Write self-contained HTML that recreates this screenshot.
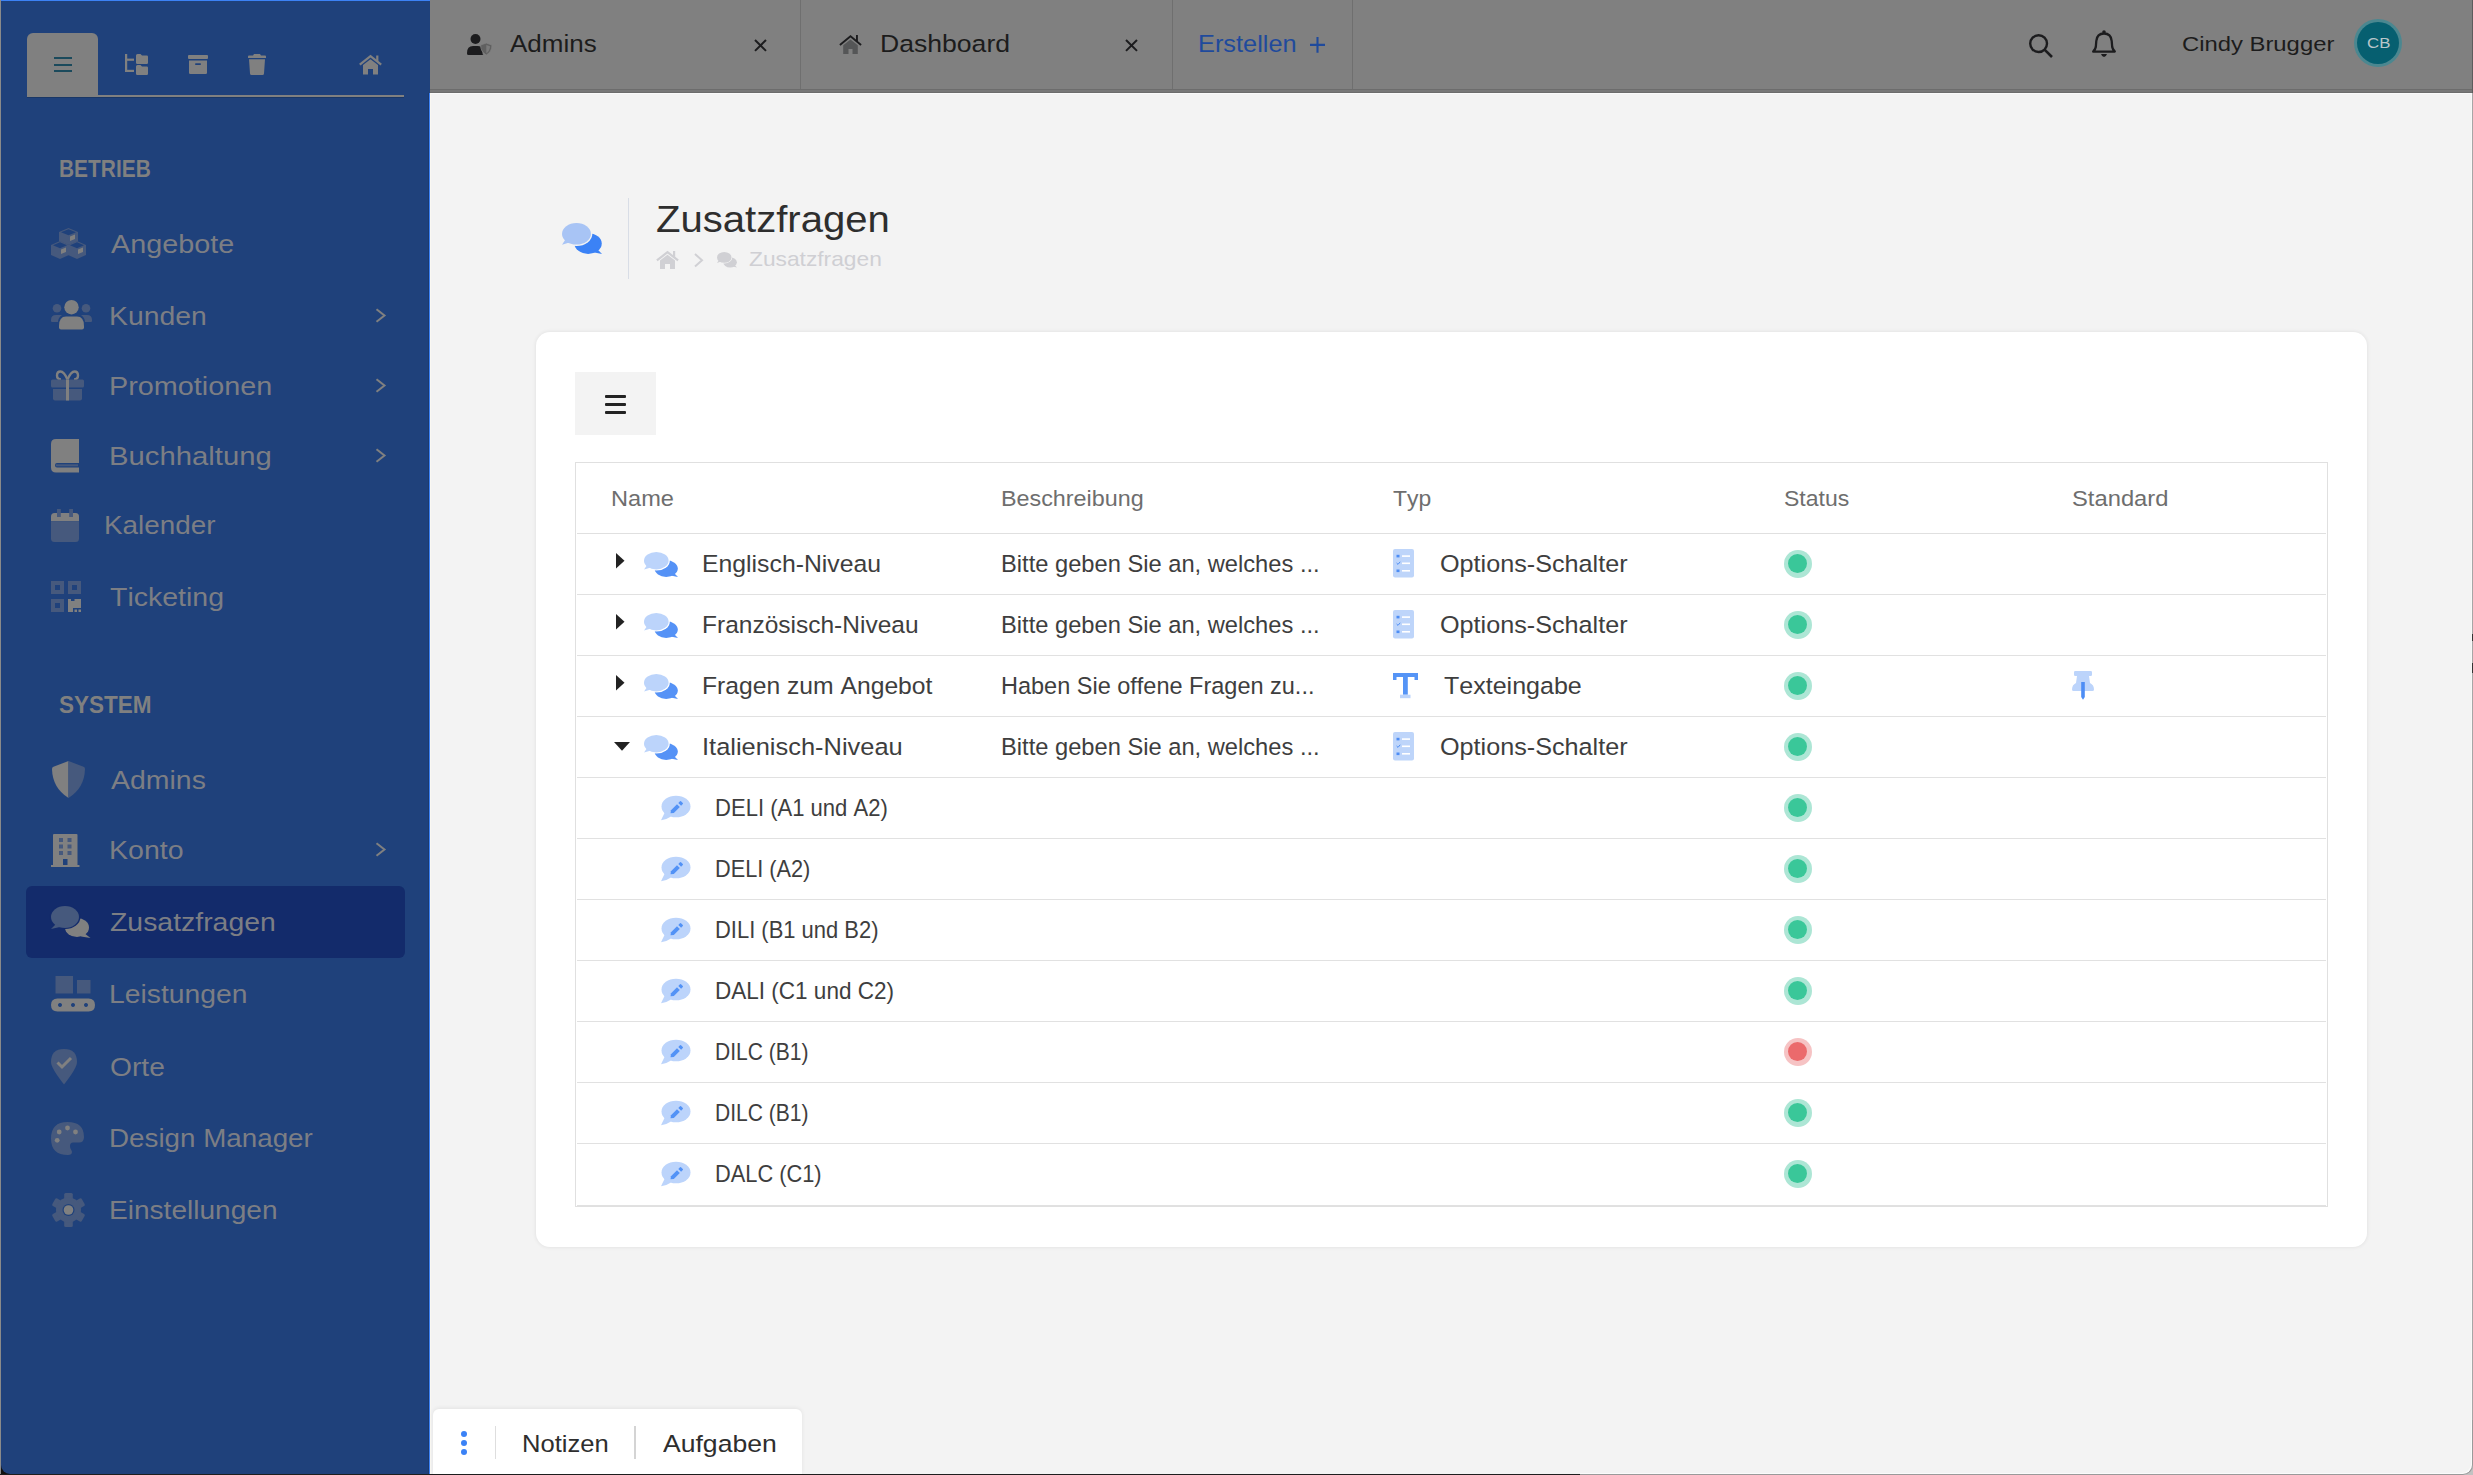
<!DOCTYPE html>
<html><head><meta charset="utf-8"><style>
html,body{margin:0;padding:0;}
body{width:2473px;height:1475px;position:relative;overflow:hidden;background:#f3f3f3;font-family:"Liberation Sans",sans-serif;font-kerning:none;}
.t{position:absolute;white-space:nowrap;}
.r{position:absolute;}
.s{position:absolute;overflow:visible;}
</style></head><body>
<div class="r" style="left:0px;top:0px;width:430px;height:1475px;background:#1f417b;"></div>
<div class="r" style="left:0px;top:0px;width:430px;height:1px;background:#3c82f6;"></div>
<div class="r" style="left:0px;top:0px;width:1px;height:1475px;background:#8a8a8a;"></div>
<div class="r" style="left:429px;top:93px;width:1px;height:1382px;background:#3c82f6;"></div>
<div class="r" style="left:430px;top:0px;width:2043px;height:89px;background:#808080;"></div>
<div class="r" style="left:430px;top:89px;width:2043px;height:4px;background:#777;border-top:1px solid #6c6c6c;border-bottom:1px solid #6c6c6c;box-sizing:border-box;"></div>
<div class="r" style="left:430px;top:93px;width:2041px;height:1px;background:#fafafa;"></div>
<div class="r" style="left:430px;top:93px;width:1px;height:1382px;background:#faf8f2;"></div>
<div class="r" style="left:428px;top:93px;width:1px;height:1382px;background:#1c3a6e;"></div>
<div class="r" style="left:2472px;top:0px;width:1px;height:93px;background:#5c5c5c;"></div>
<div class="r" style="left:800px;top:0px;width:1px;height:89px;background:#6f6f6f;"></div>
<div class="r" style="left:1172px;top:0px;width:1px;height:89px;background:#6f6f6f;"></div>
<div class="r" style="left:1352px;top:0px;width:1px;height:89px;background:#6f6f6f;"></div>
<div class="r" style="left:0px;top:1474px;width:1580px;height:1px;background:#1e1e1e;"></div>
<div class="r" style="left:1px;top:1460px;width:15px;height:14px;background:#111;"></div>
<div class="r" style="left:1px;top:1440px;width:39px;height:34px;background:#1f417b;border-bottom-left-radius:9px;"></div>
<div class="r" style="left:27px;top:33px;width:71px;height:63px;background:#808080;border-radius:6px 6px 0 0;"></div>
<div class="r" style="left:54px;top:57px;width:18px;height:2px;background:#1b4a5c;"></div>
<div class="r" style="left:54px;top:63.5px;width:18px;height:2.0px;background:#1b4a5c;"></div>
<div class="r" style="left:54px;top:70px;width:18px;height:2px;background:#1b4a5c;"></div>
<div class="r" style="left:27px;top:95px;width:377px;height:1.5px;background:#808080;"></div>
<div class="r" style="left:27px;top:96.5px;width:377px;height:1.5px;background:#1a3766;"></div>
<div class="t" style="left:59.14px;top:157.00px;font-size:24.56px;line-height:24.56px;letter-spacing:0.000px;font-weight:700;color:#808080;transform:scaleX(0.8513);transform-origin:0 0;">BETRIEB</div>
<div class="t" style="left:58.82px;top:693.00px;font-size:24.56px;line-height:24.56px;letter-spacing:0.000px;font-weight:700;color:#808080;transform:scaleX(0.9176);transform-origin:0 0;">SYSTEM</div>
<div class="r" style="left:26px;top:886px;width:379px;height:72px;background:#132b6b;border-radius:6px;"></div>
<div class="t" style="left:110.90px;top:232.00px;font-size:25.58px;line-height:25.58px;letter-spacing:0.000px;font-weight:400;color:#7c7e84;transform:scaleX(1.1252);transform-origin:0 0;">Angebote</div>
<div class="t" style="left:108.63px;top:304.00px;font-size:25.58px;line-height:25.58px;letter-spacing:0.000px;font-weight:400;color:#7c7e84;transform:scaleX(1.1088);transform-origin:0 0;">Kunden</div>
<svg class="s" style="left:375px;top:307.6px;width:11px;height:15.0px;" viewBox="0 0 11 15" preserveAspectRatio="none"><path d="M1.5 1.2 L9.5 7.5 L1.5 13.8" fill="none" stroke="#808080" stroke-width="2"/></svg>
<div class="t" style="left:108.59px;top:374.00px;font-size:25.58px;line-height:25.58px;letter-spacing:0.000px;font-weight:400;color:#7c7e84;transform:scaleX(1.1264);transform-origin:0 0;">Promotionen</div>
<svg class="s" style="left:375px;top:377.6px;width:11px;height:15.0px;" viewBox="0 0 11 15" preserveAspectRatio="none"><path d="M1.5 1.2 L9.5 7.5 L1.5 13.8" fill="none" stroke="#808080" stroke-width="2"/></svg>
<div class="t" style="left:108.56px;top:444.00px;font-size:25.58px;line-height:25.58px;letter-spacing:0.000px;font-weight:400;color:#7c7e84;transform:scaleX(1.1449);transform-origin:0 0;">Buchhaltung</div>
<svg class="s" style="left:375px;top:447.6px;width:11px;height:15.0px;" viewBox="0 0 11 15" preserveAspectRatio="none"><path d="M1.5 1.2 L9.5 7.5 L1.5 13.8" fill="none" stroke="#808080" stroke-width="2"/></svg>
<div class="t" style="left:104.47px;top:513.00px;font-size:25.58px;line-height:25.58px;letter-spacing:0.000px;font-weight:400;color:#7c7e84;transform:scaleX(1.0891);transform-origin:0 0;">Kalender</div>
<div class="t" style="left:110.33px;top:585.00px;font-size:25.58px;line-height:25.58px;letter-spacing:0.000px;font-weight:400;color:#7c7e84;transform:scaleX(1.1143);transform-origin:0 0;">Ticketing</div>
<div class="t" style="left:110.90px;top:768.00px;font-size:25.58px;line-height:25.58px;letter-spacing:0.000px;font-weight:400;color:#7c7e84;transform:scaleX(1.1123);transform-origin:0 0;">Admins</div>
<div class="t" style="left:108.62px;top:838.00px;font-size:25.58px;line-height:25.58px;letter-spacing:0.000px;font-weight:400;color:#7c7e84;transform:scaleX(1.1162);transform-origin:0 0;">Konto</div>
<svg class="s" style="left:375px;top:841.8px;width:11px;height:15.0px;" viewBox="0 0 11 15" preserveAspectRatio="none"><path d="M1.5 1.2 L9.5 7.5 L1.5 13.8" fill="none" stroke="#808080" stroke-width="2"/></svg>
<div class="t" style="left:110.05px;top:910.00px;font-size:25.58px;line-height:25.58px;letter-spacing:0.000px;font-weight:400;color:#7c7e84;transform:scaleX(1.1108);transform-origin:0 0;">Zusatzfragen</div>
<div class="t" style="left:108.64px;top:982.00px;font-size:25.58px;line-height:25.58px;letter-spacing:0.000px;font-weight:400;color:#7c7e84;transform:scaleX(1.1064);transform-origin:0 0;">Leistungen</div>
<div class="t" style="left:109.63px;top:1055.00px;font-size:25.58px;line-height:25.58px;letter-spacing:0.000px;font-weight:400;color:#7c7e84;transform:scaleX(1.1021);transform-origin:0 0;">Orte</div>
<div class="t" style="left:109.08px;top:1126.00px;font-size:25.58px;line-height:25.58px;letter-spacing:0.000px;font-weight:400;color:#7c7e84;transform:scaleX(1.0858);transform-origin:0 0;">Design Manager</div>
<div class="t" style="left:109.05px;top:1198.00px;font-size:25.58px;line-height:25.58px;letter-spacing:0.000px;font-weight:400;color:#7c7e84;transform:scaleX(1.0973);transform-origin:0 0;">Einstellungen</div>
<div class="t" style="left:510.20px;top:33.00px;font-size:23.55px;line-height:23.55px;letter-spacing:0.000px;font-weight:400;color:#1c1c1c;transform:scaleX(1.1042);transform-origin:0 0;">Admins</div>
<div class="t" style="left:879.67px;top:33.00px;font-size:23.55px;line-height:23.55px;letter-spacing:0.000px;font-weight:400;color:#1c1c1c;transform:scaleX(1.1286);transform-origin:0 0;">Dashboard</div>
<div class="t" style="left:1198.17px;top:33.00px;font-size:23.26px;line-height:23.26px;letter-spacing:0.000px;font-weight:400;color:#1f4a9c;transform:scaleX(1.0896);transform-origin:0 0;">Erstellen</div>
<div class="t" style="left:2182.11px;top:33.00px;font-size:21.08px;line-height:21.08px;letter-spacing:0.000px;font-weight:400;color:#1c1c1c;transform:scaleX(1.1305);transform-origin:0 0;">Cindy Brugger</div>
<div class="r" style="left:628px;top:198px;width:1px;height:81px;background:#d8dde6;"></div>
<div class="t" style="left:655.80px;top:202.00px;font-size:36.48px;line-height:36.48px;letter-spacing:0.000px;font-weight:400;color:#2e2e2e;transform:scaleX(1.0983);transform-origin:0 0;">Zusatzfragen</div>
<div class="t" style="left:748.92px;top:249.00px;font-size:20.49px;line-height:20.49px;letter-spacing:0.000px;font-weight:400;color:#cfcfd3;transform:scaleX(1.1110);transform-origin:0 0;">Zusatzfragen</div>
<div class="r" style="left:536px;top:332px;width:1831px;height:915px;background:#fff;border-radius:14px;box-shadow:0 0 4px rgba(0,0,0,0.09);"></div>
<div class="r" style="left:575px;top:372px;width:81px;height:63px;background:#f3f3f3;"></div>
<div class="r" style="left:605px;top:394.5px;width:21px;height:3.0px;background:#222;border-radius:1px;"></div>
<div class="r" style="left:605px;top:402.5px;width:21px;height:3.0px;background:#222;border-radius:1px;"></div>
<div class="r" style="left:605px;top:410.5px;width:21px;height:3.0px;background:#222;border-radius:1px;"></div>
<div class="r" style="left:575px;top:462px;width:1753px;height:745px;border:1px solid #e0e0e0;box-sizing:border-box;"></div>
<div class="r" style="left:577px;top:1205px;width:1749px;height:1px;background:#e1e1e1;"></div>
<div class="r" style="left:577px;top:533px;width:1749px;height:1px;background:#e0e0e0;"></div>
<div class="r" style="left:577px;top:594px;width:1749px;height:1px;background:#e1e1e1;"></div>
<div class="r" style="left:577px;top:655px;width:1749px;height:1px;background:#e1e1e1;"></div>
<div class="r" style="left:577px;top:716px;width:1749px;height:1px;background:#e1e1e1;"></div>
<div class="r" style="left:577px;top:777px;width:1749px;height:1px;background:#e1e1e1;"></div>
<div class="r" style="left:577px;top:838px;width:1749px;height:1px;background:#e1e1e1;"></div>
<div class="r" style="left:577px;top:899px;width:1749px;height:1px;background:#e1e1e1;"></div>
<div class="r" style="left:577px;top:960px;width:1749px;height:1px;background:#e1e1e1;"></div>
<div class="r" style="left:577px;top:1021px;width:1749px;height:1px;background:#e1e1e1;"></div>
<div class="r" style="left:577px;top:1082px;width:1749px;height:1px;background:#e1e1e1;"></div>
<div class="r" style="left:577px;top:1143px;width:1749px;height:1px;background:#e1e1e1;"></div>
<div class="t" style="left:610.71px;top:489.00px;font-size:21.37px;line-height:21.37px;letter-spacing:0.000px;font-weight:400;color:#6e6e6e;transform:scaleX(1.1037);transform-origin:0 0;">Name</div>
<div class="t" style="left:1001.23px;top:489.00px;font-size:21.37px;line-height:21.37px;letter-spacing:0.000px;font-weight:400;color:#6e6e6e;transform:scaleX(1.0921);transform-origin:0 0;">Beschreibung</div>
<div class="t" style="left:1393.24px;top:489.00px;font-size:21.37px;line-height:21.37px;letter-spacing:0.000px;font-weight:400;color:#6e6e6e;transform:scaleX(1.0719);transform-origin:0 0;">Typ</div>
<div class="t" style="left:1783.56px;top:489.00px;font-size:21.37px;line-height:21.37px;letter-spacing:0.000px;font-weight:400;color:#6e6e6e;transform:scaleX(1.0771);transform-origin:0 0;">Status</div>
<div class="t" style="left:2071.93px;top:489.00px;font-size:21.37px;line-height:21.37px;letter-spacing:0.000px;font-weight:400;color:#6e6e6e;transform:scaleX(1.1126);transform-origin:0 0;">Standard</div>
<div class="t" style="left:702.02px;top:553.00px;font-size:23.69px;line-height:23.69px;letter-spacing:0.000px;font-weight:400;color:#3e3e3e;transform:scaleX(1.0463);transform-origin:0 0;">Englisch-Niveau</div>
<div class="t" style="left:1001.10px;top:553.00px;font-size:23.69px;line-height:23.69px;letter-spacing:0.000px;font-weight:400;color:#3e3e3e;transform:scaleX(0.9999);transform-origin:0 0;">Bitte geben Sie an, welches ...</div>
<div class="t" style="left:1439.87px;top:553.00px;font-size:23.69px;line-height:23.69px;letter-spacing:0.000px;font-weight:400;color:#3e3e3e;transform:scaleX(1.0631);transform-origin:0 0;">Options-Schalter</div>
<div class="t" style="left:702.04px;top:614.00px;font-size:23.69px;line-height:23.69px;letter-spacing:0.000px;font-weight:400;color:#3e3e3e;transform:scaleX(1.0346);transform-origin:0 0;">Französisch-Niveau</div>
<div class="t" style="left:1001.10px;top:614.00px;font-size:23.69px;line-height:23.69px;letter-spacing:0.000px;font-weight:400;color:#3e3e3e;transform:scaleX(0.9999);transform-origin:0 0;">Bitte geben Sie an, welches ...</div>
<div class="t" style="left:1439.87px;top:614.00px;font-size:23.69px;line-height:23.69px;letter-spacing:0.000px;font-weight:400;color:#3e3e3e;transform:scaleX(1.0631);transform-origin:0 0;">Options-Schalter</div>
<div class="t" style="left:702.03px;top:675.00px;font-size:23.69px;line-height:23.69px;letter-spacing:0.000px;font-weight:400;color:#3e3e3e;transform:scaleX(1.0416);transform-origin:0 0;">Fragen zum Angebot</div>
<div class="t" style="left:1001.12px;top:675.00px;font-size:23.69px;line-height:23.69px;letter-spacing:0.000px;font-weight:400;color:#3e3e3e;transform:scaleX(0.9918);transform-origin:0 0;">Haben Sie offene Fragen zu...</div>
<div class="t" style="left:1444.20px;top:675.00px;font-size:23.69px;line-height:23.69px;letter-spacing:0.000px;font-weight:400;color:#3e3e3e;transform:scaleX(1.0566);transform-origin:0 0;">Texteingabe</div>
<div class="t" style="left:701.71px;top:736.00px;font-size:23.69px;line-height:23.69px;letter-spacing:0.000px;font-weight:400;color:#3e3e3e;transform:scaleX(1.0734);transform-origin:0 0;">Italienisch-Niveau</div>
<div class="t" style="left:1001.10px;top:736.00px;font-size:23.69px;line-height:23.69px;letter-spacing:0.000px;font-weight:400;color:#3e3e3e;transform:scaleX(0.9999);transform-origin:0 0;">Bitte geben Sie an, welches ...</div>
<div class="t" style="left:1439.87px;top:736.00px;font-size:23.69px;line-height:23.69px;letter-spacing:0.000px;font-weight:400;color:#3e3e3e;transform:scaleX(1.0631);transform-origin:0 0;">Options-Schalter</div>
<div class="t" style="left:715.24px;top:797.00px;font-size:23.69px;line-height:23.69px;letter-spacing:0.000px;font-weight:400;color:#3e3e3e;transform:scaleX(0.9309);transform-origin:0 0;">DELI (A1 und A2)</div>
<div class="t" style="left:715.26px;top:858.00px;font-size:23.69px;line-height:23.69px;letter-spacing:0.000px;font-weight:400;color:#3e3e3e;transform:scaleX(0.9168);transform-origin:0 0;">DELI (A2)</div>
<div class="t" style="left:715.24px;top:919.00px;font-size:23.69px;line-height:23.69px;letter-spacing:0.000px;font-weight:400;color:#3e3e3e;transform:scaleX(0.9268);transform-origin:0 0;">DILI (B1 und B2)</div>
<div class="t" style="left:715.20px;top:980.00px;font-size:23.69px;line-height:23.69px;letter-spacing:0.000px;font-weight:400;color:#3e3e3e;transform:scaleX(0.9507);transform-origin:0 0;">DALI (C1 und C2)</div>
<div class="t" style="left:715.32px;top:1041.00px;font-size:23.69px;line-height:23.69px;letter-spacing:0.000px;font-weight:400;color:#3e3e3e;transform:scaleX(0.8874);transform-origin:0 0;">DILC (B1)</div>
<div class="t" style="left:715.32px;top:1102.00px;font-size:23.69px;line-height:23.69px;letter-spacing:0.000px;font-weight:400;color:#3e3e3e;transform:scaleX(0.8874);transform-origin:0 0;">DILC (B1)</div>
<div class="t" style="left:715.26px;top:1163.00px;font-size:23.69px;line-height:23.69px;letter-spacing:0.000px;font-weight:400;color:#3e3e3e;transform:scaleX(0.9198);transform-origin:0 0;">DALC (C1)</div>
<div class="r" style="left:1783.5px;top:549.7px;width:28.0px;height:28.0px;background:#ade6d5;border-radius:50%;"></div>
<div class="r" style="left:1787.7px;top:553.9000000000001px;width:19.59999999999991px;height:19.59999999999991px;background:#3ac799;border-radius:50%;"></div>
<div class="r" style="left:1783.5px;top:610.7px;width:28.0px;height:28.0px;background:#ade6d5;border-radius:50%;"></div>
<div class="r" style="left:1787.7px;top:614.9000000000001px;width:19.59999999999991px;height:19.59999999999991px;background:#3ac799;border-radius:50%;"></div>
<div class="r" style="left:1783.5px;top:671.7px;width:28.0px;height:28.0px;background:#ade6d5;border-radius:50%;"></div>
<div class="r" style="left:1787.7px;top:675.9000000000001px;width:19.59999999999991px;height:19.59999999999991px;background:#3ac799;border-radius:50%;"></div>
<div class="r" style="left:1783.5px;top:732.7px;width:28.0px;height:28.0px;background:#ade6d5;border-radius:50%;"></div>
<div class="r" style="left:1787.7px;top:736.9000000000001px;width:19.59999999999991px;height:19.59999999999991px;background:#3ac799;border-radius:50%;"></div>
<div class="r" style="left:1783.5px;top:793.7px;width:28.0px;height:28.0px;background:#ade6d5;border-radius:50%;"></div>
<div class="r" style="left:1787.7px;top:797.9000000000001px;width:19.59999999999991px;height:19.59999999999991px;background:#3ac799;border-radius:50%;"></div>
<div class="r" style="left:1783.5px;top:854.7px;width:28.0px;height:28.0px;background:#ade6d5;border-radius:50%;"></div>
<div class="r" style="left:1787.7px;top:858.9000000000001px;width:19.59999999999991px;height:19.59999999999991px;background:#3ac799;border-radius:50%;"></div>
<div class="r" style="left:1783.5px;top:915.7px;width:28.0px;height:28.0px;background:#ade6d5;border-radius:50%;"></div>
<div class="r" style="left:1787.7px;top:919.9000000000001px;width:19.59999999999991px;height:19.59999999999991px;background:#3ac799;border-radius:50%;"></div>
<div class="r" style="left:1783.5px;top:976.7px;width:28.0px;height:28.0px;background:#ade6d5;border-radius:50%;"></div>
<div class="r" style="left:1787.7px;top:980.9000000000001px;width:19.59999999999991px;height:19.59999999999991px;background:#3ac799;border-radius:50%;"></div>
<div class="r" style="left:1783.5px;top:1037.7px;width:28.0px;height:28.0px;background:#f6c3c4;border-radius:50%;"></div>
<div class="r" style="left:1787.7px;top:1041.9px;width:19.59999999999991px;height:19.59999999999991px;background:#eb6a6c;border-radius:50%;"></div>
<div class="r" style="left:1783.5px;top:1098.7px;width:28.0px;height:28.0px;background:#ade6d5;border-radius:50%;"></div>
<div class="r" style="left:1787.7px;top:1102.9px;width:19.59999999999991px;height:19.59999999999991px;background:#3ac799;border-radius:50%;"></div>
<div class="r" style="left:1783.5px;top:1159.7px;width:28.0px;height:28.0px;background:#ade6d5;border-radius:50%;"></div>
<div class="r" style="left:1787.7px;top:1163.9px;width:19.59999999999991px;height:19.59999999999991px;background:#3ac799;border-radius:50%;"></div>
<div class="r" style="left:433px;top:1409px;width:369px;height:65px;background:#fff;border-radius:6px 6px 0 0;box-shadow:0 -1px 4px rgba(0,0,0,0.07);"></div>
<div class="r" style="left:461px;top:1430.5px;width:6px;height:6.0px;background:#3b82f6;border-radius:50%;"></div>
<div class="r" style="left:461px;top:1439.5px;width:6px;height:6.0px;background:#3b82f6;border-radius:50%;"></div>
<div class="r" style="left:461px;top:1448.5px;width:6px;height:6.0px;background:#3b82f6;border-radius:50%;"></div>
<div class="r" style="left:495px;top:1426px;width:1px;height:33px;background:#dedede;"></div>
<div class="r" style="left:634px;top:1426px;width:2px;height:33px;background:#d4d4d4;"></div>
<div class="t" style="left:521.95px;top:1432.00px;font-size:24.71px;line-height:24.71px;letter-spacing:0.000px;font-weight:400;color:#2e2e2e;transform:scaleX(1.0351);transform-origin:0 0;">Notizen</div>
<div class="t" style="left:663.00px;top:1432.00px;font-size:24.71px;line-height:24.71px;letter-spacing:0.000px;font-weight:400;color:#2e2e2e;transform:scaleX(1.0754);transform-origin:0 0;">Aufgaben</div>
<div class="r" style="left:2354px;top:19px;width:48px;height:48px;background:#4b8790;border-radius:50%;"></div>
<div class="r" style="left:2357px;top:22px;width:42px;height:42px;background:#065f70;border-radius:50%;"></div>
<div class="t" style="left:2366.76px;top:35.00px;font-size:15.55px;line-height:15.55px;letter-spacing:0.000px;font-weight:400;color:#b9c6ca;transform:scaleX(1.0808);transform-origin:0 0;">CB</div>
<svg class="s" style="left:125px;top:54px;width:23px;height:21px;" viewBox="0 0 23 21" preserveAspectRatio="none"><rect x="0" y="0" width="2.2" height="18" fill="#808080"/><rect x="0" y="4.6" width="9" height="2.2" fill="#808080"/><rect x="0" y="15.8" width="9" height="2.2" fill="#808080"/><path d="M11 1.5 Q11 0 12.5 0 L15.5 0 L17 1.5 L21.8 1.5 Q23 1.5 23 2.8 L23 8.8 Q23 10 21.8 10 L12.2 10 Q11 10 11 8.8 Z" fill="#808080"/><path d="M11 12.5 Q11 11 12.5 11 L15.5 11 L17 12.5 L21.8 12.5 Q23 12.5 23 13.8 L23 19.8 Q23 21 21.8 21 L12.2 21 Q11 21 11 19.8 Z" fill="#808080"/></svg>
<svg class="s" style="left:188px;top:55px;width:20px;height:19px;" viewBox="0 0 20 19" preserveAspectRatio="none"><rect x="0" y="0" width="20" height="4" rx="1" fill="#808080"/><path d="M1 5.5 L19 5.5 L19 17.8 Q19 19 17.8 19 L2.2 19 Q1 19 1 17.8 Z" fill="#808080"/><rect x="7" y="8.2" width="6" height="1.8" rx="0.9" fill="#1f417b"/></svg>
<svg class="s" style="left:248px;top:54px;width:18px;height:21px;" viewBox="0 0 18 21" preserveAspectRatio="none"><path d="M6 0 L12 0 L13 1.6 L17 1.6 Q18 1.6 18 2.6 L18 4 L0 4 L0 2.6 Q0 1.6 1 1.6 L5 1.6 Z" fill="#808080"/><path d="M1 5.2 L17 5.2 L16 19.5 Q15.9 21 14.5 21 L3.5 21 Q2.1 21 2 19.5 Z" fill="#808080"/></svg>
<svg class="s" style="left:359px;top:54.5px;width:23px;height:19.5px;" viewBox="0 0 23 19.5" preserveAspectRatio="none"><path d="M0.8 9.6 L11.5 1.2 L22.2 9.6" fill="none" stroke="#808080" stroke-width="2.2" stroke-linejoin="miter"/><rect x="17.2" y="0.5" width="2.2" height="6" fill="#808080"/><path d="M4 10 L11.5 4.2 L19 10 L19 19.5 L14 19.5 L14 14 L9 14 L9 19.5 L4 19.5 Z" fill="#808080"/></svg>
<svg class="s" style="left:51px;top:228px;width:35px;height:31px;" viewBox="0 0 35 31" preserveAspectRatio="none"><path d="M8 4 L17.5 0 L27 4 L27 13 L17.5 17 L8 13 Z" fill="#46597d"/><path d="M10 4.2 L17.5 1.3 L25 4.2 L17.5 7.2 Z" fill="#1f417b"/><path d="M0 17 L9 13 L18 17 L18 27 L9 31 L0 27 Z" fill="#46597d"/><path d="M2 17.2 L9 14.3 L16 17.2 L9 20.2 Z" fill="#1f417b"/><path d="M17 17 L26 13 L35 17 L35 27 L26 31 L17 27 Z" fill="#46597d"/><path d="M19 17.2 L26 14.3 L33 17.2 L26 20.2 Z" fill="#1f417b"/><path d="M19 8.5 L24 6.5 L24 11 L19 13 Z" fill="#808080"/><path d="M10 21.5 L15 19.5 L15 24 L10 26 Z" fill="#808080"/><path d="M27 21.5 L32 19.5 L32 24 L27 26 Z" fill="#808080"/></svg>
<svg class="s" style="left:51px;top:299.5px;width:41px;height:29.5px;" viewBox="0 0 41 29.5" preserveAspectRatio="none"><circle cx="6" cy="8.3" r="4.3" fill="#46597d"/><circle cx="35" cy="8.3" r="4.3" fill="#46597d"/><path d="M0 20 Q0 15 5 15 L11 15 Q7 18 7 22 L1 22 Q0 22 0 21 Z" fill="#46597d"/><path d="M41 20 Q41 15 36 15 L30 15 Q34 18 34 22 L40 22 Q41 22 41 21 Z" fill="#46597d"/><circle cx="20.5" cy="7.2" r="7.2" fill="#808080"/><path d="M8 26 Q8 16.5 15 16.5 L26 16.5 Q33 16.5 33 26 L33 27.5 Q33 29.5 31 29.5 L10 29.5 Q8 29.5 8 27.5 Z" fill="#808080"/></svg>
<svg class="s" style="left:51px;top:371px;width:33px;height:29.5px;" viewBox="0 0 33 29.5" preserveAspectRatio="none"><path d="M16.5 8.5 Q13 0.5 9.5 0.5 Q6 0.5 6 4.5 Q6 8.5 10 8.5" fill="none" stroke="#808080" stroke-width="2.4"/><path d="M16.5 8.5 Q20 0.5 23.5 0.5 Q27 0.5 27 4.5 Q27 8.5 23 8.5" fill="none" stroke="#808080" stroke-width="2.4"/><rect x="0" y="8.5" width="33" height="8" rx="1.5" fill="#46597d"/><path d="M2 18 L31 18 L31 27.5 Q31 29.5 29 29.5 L4 29.5 Q2 29.5 2 27.5 Z" fill="#46597d"/><rect x="15" y="8.5" width="3" height="21" fill="#808080"/></svg>
<svg class="s" style="left:51px;top:439px;width:28px;height:33.5px;" viewBox="0 0 28 33.5" preserveAspectRatio="none"><path d="M5 0 L28 0 L28 24 L6 24 Q4 24 4 26.2 Q4 28.5 6 28.5 L28 28.5 L28 33.5 L5 33.5 Q0 33.5 0 28.5 L0 5 Q0 0 5 0 Z" fill="#808080"/><rect x="5" y="25.3" width="22" height="2" fill="#46597d"/></svg>
<svg class="s" style="left:51px;top:509px;width:28px;height:33px;" viewBox="0 0 28 33" preserveAspectRatio="none"><path d="M3.5 4 L24.5 4 Q28 4 28 7.5 L28 12.2 L0 12.2 L0 7.5 Q0 4 3.5 4 Z" fill="#808080"/><path d="M0 12.2 L28 12.2 L28 29.5 Q28 33 24.5 33 L3.5 33 Q0 33 0 29.5 Z" fill="#46597d"/><rect x="6" y="0" width="3.8" height="8" fill="#46597d"/><rect x="18.2" y="0" width="3.8" height="8" fill="#46597d"/></svg>
<svg class="s" style="left:51px;top:581px;width:30px;height:31px;" viewBox="0 0 30 31" preserveAspectRatio="none"><path fill-rule="evenodd" d="M0 0 H13 V13 H0 Z M4 4 V9 H9 V4 Z" fill="#46597d"/><path fill-rule="evenodd" d="M17 0 H30 V13 H17 Z M21 4 V9 H26 V4 Z" fill="#46597d"/><path fill-rule="evenodd" d="M0 18 H13 V31 H0 Z M4 22 V27 H9 V22 Z" fill="#46597d"/><path d="M17 18 H20 V20 H23.5 V18 H30 V27 H22 V31 H17 Z" fill="#808080"/><rect x="23.5" y="28.5" width="2.5" height="2.5" fill="#808080"/><rect x="27.5" y="28.5" width="2.5" height="2.5" fill="#808080"/></svg>
<svg class="s" style="left:52px;top:760.5px;width:33px;height:37.0px;" viewBox="0 0 33 37" preserveAspectRatio="none"><path d="M16.5 0 L1.5 5.8 Q0 6.4 0 8 Q0.5 27 16.5 37 Z" fill="#808080"/><path d="M16.5 0 L31.5 5.8 Q33 6.4 33 8 Q32.5 27 16.5 37 Z" fill="#46597d"/></svg>
<svg class="s" style="left:51px;top:834px;width:28.5px;height:33px;" viewBox="0 0 28.5 33" preserveAspectRatio="none"><path d="M2 1 Q2 0 3 0 L25.5 0 Q26.5 0 26.5 1 L26.5 31 L28.5 31 L28.5 33 L0 33 L0 31 L2 31 Z" fill="#808080"/><rect x="8" y="4" width="4" height="4" fill="#46597d"/><rect x="8" y="10.5" width="4" height="4" fill="#46597d"/><rect x="8" y="17" width="4" height="4" fill="#46597d"/><rect x="16.5" y="4" width="4" height="4" fill="#46597d"/><rect x="16.5" y="10.5" width="4" height="4" fill="#46597d"/><rect x="16.5" y="17" width="4" height="4" fill="#46597d"/><rect x="12" y="25" width="4.5" height="6" fill="#1f417b"/></svg>
<svg class="s" style="left:51px;top:905.5px;width:39.5px;height:32.0px;" viewBox="0 0 39.5 32" preserveAspectRatio="none"><ellipse cx="26" cy="21.5" rx="12" ry="9.5" fill="#808080"/><path d="M33 27 L39.5 32 L30 30.5 Z" fill="#808080"/><ellipse cx="14" cy="11" rx="15.5" ry="12" fill="#132b6b"/><ellipse cx="14" cy="11" rx="14" ry="11" fill="#46597d"/><path d="M5 18 L0 23 L9 21 Z" fill="#46597d"/></svg>
<svg class="s" style="left:51px;top:976px;width:44px;height:36px;" viewBox="0 0 44 36" preserveAspectRatio="none"><rect x="4.5" y="0" width="17.5" height="17.5" fill="#46597d"/><rect x="26" y="4" width="13.5" height="13.5" fill="#46597d"/><path fill-rule="evenodd" d="M6.5 22.5 H37.5 Q44 22.5 44 29 Q44 35.5 37.5 35.5 H6.5 Q0 35.5 0 29 Q0 22.5 6.5 22.5 Z M9 27 A2 2 0 1 0 9.01 27 Z M22 27 A2 2 0 1 0 22.01 27 Z M35 27 A2 2 0 1 0 35.01 27 Z" fill="#808080"/></svg>
<svg class="s" style="left:51px;top:1048.5px;width:26px;height:35.5px;" viewBox="0 0 26 35.5" preserveAspectRatio="none"><path d="M13 0 Q26 0 26 13 Q26 19 13 35.5 Q0 19 0 13 Q0 0 13 0 Z" fill="#46597d"/><path d="M6.5 13.5 L11 18 L20 9" fill="none" stroke="#808080" stroke-width="3"/></svg>
<svg class="s" style="left:51px;top:1122px;width:33px;height:33px;" viewBox="0 0 33 33" preserveAspectRatio="none"><path d="M16.5 0 Q33 0 33 15 Q33 20.5 28 20.5 L22 20.5 Q19 20.5 19 24 Q19 26 20 27.5 Q21 29 21 30 Q21 33 17 33 Q0 33 0 16.5 Q0 0 16.5 0 Z" fill="#46597d"/><circle cx="6.2" cy="18.3" r="2.4" fill="#808080"/><circle cx="8.2" cy="10" r="2.4" fill="#808080"/><circle cx="16.5" cy="6" r="2.4" fill="#808080"/><circle cx="24.5" cy="10" r="2.4" fill="#808080"/></svg>
<svg class="s" style="left:52px;top:1192.5px;width:33px;height:34.0px;" viewBox="0 0 33 34" preserveAspectRatio="none"><g transform="translate(16.5 17)"><rect x="-4.3" y="-17" width="8.6" height="7" rx="1.5" fill="#46597d" transform="rotate(0)"/><rect x="-4.3" y="-17" width="8.6" height="7" rx="1.5" fill="#46597d" transform="rotate(60)"/><rect x="-4.3" y="-17" width="8.6" height="7" rx="1.5" fill="#46597d" transform="rotate(120)"/><rect x="-4.3" y="-17" width="8.6" height="7" rx="1.5" fill="#46597d" transform="rotate(180)"/><rect x="-4.3" y="-17" width="8.6" height="7" rx="1.5" fill="#46597d" transform="rotate(240)"/><rect x="-4.3" y="-17" width="8.6" height="7" rx="1.5" fill="#46597d" transform="rotate(300)"/><circle r="12.5" fill="#46597d"/><circle r="6" fill="#1f417b"/><circle r="4.8" fill="#808080"/></g></svg>
<svg class="s" style="left:467px;top:34px;width:25px;height:21px;" viewBox="0 0 25 21" preserveAspectRatio="none"><circle cx="8.5" cy="5" r="5" fill="#1c1c1e"/><path d="M0 19 Q0 12 6 12 L11 12 Q14 12 15.5 13.5 L15.5 19 Q15.5 21 16.5 21 L1.5 21 Q0 21 0 19.5 Z" fill="#1c1c1e"/><path d="M19.3 9 L25 11 Q25 18 19.3 21 Q13.6 18 13.6 11 Z" fill="#606060" stroke="#808080" stroke-width="0.8"/><path d="M19.3 11 L23 12.3 Q23 17 19.3 19.3 Z" fill="#7a7a7a"/></svg>
<svg class="s" style="left:839px;top:35px;width:23px;height:19px;" viewBox="0 0 23 19" preserveAspectRatio="none"><path d="M0.9 10 L11.5 1.3 L22.1 10" fill="none" stroke="#1c1c1e" stroke-width="1.9"/><rect x="17" y="0" width="1.9" height="6" fill="#1c1c1e"/><path d="M4.2 10.3 L11.5 4.6 L18.8 10.3 L18.8 19 L13.5 19 L13.5 14 L9.5 14 L9.5 19 L4.2 19 Z" fill="#555657"/></svg>
<svg class="s" style="left:754px;top:38.9px;width:13px;height:12.899999999999999px;" viewBox="0 0 13 13" preserveAspectRatio="none"><path d="M1 1 L12 12 M12 1 L1 12" stroke="#1c1c1e" stroke-width="2" fill="none"/></svg>
<svg class="s" style="left:1125px;top:38.9px;width:13px;height:12.899999999999999px;" viewBox="0 0 13 13" preserveAspectRatio="none"><path d="M1 1 L12 12 M12 1 L1 12" stroke="#1c1c1e" stroke-width="2" fill="none"/></svg>
<svg class="s" style="left:1310px;top:36.7px;width:15px;height:15.699999999999996px;" viewBox="0 0 15 15.7" preserveAspectRatio="none"><path d="M7.5 0 V15.7 M0 7.85 H15" stroke="#1f4a9c" stroke-width="2.1" fill="none"/></svg>
<svg class="s" style="left:2029px;top:34px;width:24px;height:23px;" viewBox="0 0 24 23" preserveAspectRatio="none"><circle cx="9.6" cy="9.6" r="8.4" fill="none" stroke="#1c1c1e" stroke-width="2.4"/><path d="M15.8 15.8 L23 23" stroke="#1c1c1e" stroke-width="2.6"/></svg>
<svg class="s" style="left:2091.5px;top:30px;width:24.0px;height:27px;" viewBox="0 0 24 27" preserveAspectRatio="none"><circle cx="12" cy="2" r="1.8" fill="#1c1c1e"/><path d="M12 3.5 Q5 3.5 4.3 11 L3.8 17 Q3.5 19 1.2 21.6 L22.8 21.6 Q20.5 19 20.2 17 L19.7 11 Q19 3.5 12 3.5 Z" fill="none" stroke="#1c1c1e" stroke-width="2.3" stroke-linejoin="round"/><path d="M9 24 L15 24 Q14 27 12 27 Q10 27 9 24 Z" fill="#1c1c1e"/></svg>
<svg class="s" style="left:562px;top:223px;width:40px;height:31px;" viewBox="0 0 34 25" preserveAspectRatio="none"><ellipse cx="22.2" cy="16.6" rx="11.6" ry="8.3" fill="#3b82f6"/><path d="M29.5 20.5 L34 25 L26.5 23.5 Z" fill="#3b82f6"/><ellipse cx="12.3" cy="8.7" rx="13.5" ry="9.9" fill="#f3f3f3"/><ellipse cx="12.3" cy="8.7" rx="12.3" ry="8.7" fill="#a8c4f5"/><path d="M3.5 12.5 L0 17.6 L7 15.5 Z" fill="#a8c4f5"/></svg>
<svg class="s" style="left:656px;top:251px;width:23px;height:18px;" viewBox="0 0 23 18" preserveAspectRatio="none"><path d="M0.9 9.4 L11.5 1.2 L22.1 9.4" fill="none" stroke="#d0d0d4" stroke-width="2.2"/><rect x="17" y="0" width="2.2" height="6" fill="#d0d0d4"/><path d="M4 9.6 L11.5 3.8 L19 9.6 L19 18 L14 18 L14 13 L9 13 L9 18 L4 18 Z" fill="#d0d0d4"/></svg>
<svg class="s" style="left:694px;top:252.5px;width:9px;height:14.5px;" viewBox="0 0 9 14.5" preserveAspectRatio="none"><path d="M1 1 L8 7.25 L1 13.5" fill="none" stroke="#d0d0d4" stroke-width="2"/></svg>
<svg class="s" style="left:717px;top:251.5px;width:20px;height:15.5px;" viewBox="0 0 34 25" preserveAspectRatio="none"><ellipse cx="22.2" cy="16.6" rx="11.6" ry="8.3" fill="#d0d0d4"/><path d="M29.5 20.5 L34 25 L26.5 23.5 Z" fill="#d0d0d4"/><ellipse cx="12.3" cy="8.7" rx="13.5" ry="9.9" fill="#f3f3f3"/><ellipse cx="12.3" cy="8.7" rx="12.3" ry="8.7" fill="#d0d0d4"/><path d="M3.5 12.5 L0 17.6 L7 15.5 Z" fill="#d0d0d4"/></svg>
<svg class="s" style="left:615.5px;top:552.7px;width:8.5px;height:15.5px;" viewBox="0 0 8.5 15.5" preserveAspectRatio="none"><path d="M0 0 L8.5 7.75 L0 15.5 Z" fill="#222"/></svg>
<svg class="s" style="left:644px;top:551.7px;width:34px;height:25.0px;" viewBox="0 0 34 25" preserveAspectRatio="none"><ellipse cx="22.2" cy="16.6" rx="11.6" ry="8.3" fill="#5592f6"/><path d="M29.5 20.5 L34 25 L26.5 23.5 Z" fill="#5592f6"/><ellipse cx="12.3" cy="8.7" rx="13.5" ry="9.9" fill="#ffffff"/><ellipse cx="12.3" cy="8.7" rx="12.3" ry="8.7" fill="#bcd4fb"/><path d="M3.5 12.5 L0 17.6 L7 15.5 Z" fill="#bcd4fb"/></svg>
<svg class="s" style="left:615.5px;top:613.7px;width:8.5px;height:15.5px;" viewBox="0 0 8.5 15.5" preserveAspectRatio="none"><path d="M0 0 L8.5 7.75 L0 15.5 Z" fill="#222"/></svg>
<svg class="s" style="left:644px;top:612.7px;width:34px;height:25.0px;" viewBox="0 0 34 25" preserveAspectRatio="none"><ellipse cx="22.2" cy="16.6" rx="11.6" ry="8.3" fill="#5592f6"/><path d="M29.5 20.5 L34 25 L26.5 23.5 Z" fill="#5592f6"/><ellipse cx="12.3" cy="8.7" rx="13.5" ry="9.9" fill="#ffffff"/><ellipse cx="12.3" cy="8.7" rx="12.3" ry="8.7" fill="#bcd4fb"/><path d="M3.5 12.5 L0 17.6 L7 15.5 Z" fill="#bcd4fb"/></svg>
<svg class="s" style="left:615.5px;top:674.7px;width:8.5px;height:15.5px;" viewBox="0 0 8.5 15.5" preserveAspectRatio="none"><path d="M0 0 L8.5 7.75 L0 15.5 Z" fill="#222"/></svg>
<svg class="s" style="left:644px;top:673.7px;width:34px;height:25.0px;" viewBox="0 0 34 25" preserveAspectRatio="none"><ellipse cx="22.2" cy="16.6" rx="11.6" ry="8.3" fill="#5592f6"/><path d="M29.5 20.5 L34 25 L26.5 23.5 Z" fill="#5592f6"/><ellipse cx="12.3" cy="8.7" rx="13.5" ry="9.9" fill="#ffffff"/><ellipse cx="12.3" cy="8.7" rx="12.3" ry="8.7" fill="#bcd4fb"/><path d="M3.5 12.5 L0 17.6 L7 15.5 Z" fill="#bcd4fb"/></svg>
<svg class="s" style="left:1393px;top:672.7px;width:25px;height:25.5px;" viewBox="0 0 25 25.5" preserveAspectRatio="none"><path d="M0 0 H25 V7 H21.5 V4 H14.8 V21.7 H10 V4 H3.5 V7 H0 Z" fill="#5594f6"/><rect x="7" y="21.7" width="10.5" height="3.5" fill="#bcd4fb"/></svg>
<svg class="s" style="left:2072px;top:671.0px;width:22px;height:28.700000000000045px;" viewBox="0 0 22 28.7" preserveAspectRatio="none"><rect x="2" y="0" width="18" height="5" rx="1.2" fill="#bcd4fb"/><path d="M5 5 H17 L18 12 Q22 14 22 18.5 Q22 20 20.5 20 H1.5 Q0 20 0 18.5 Q0 14 4 12 Z" fill="#bcd4fb"/><path d="M9.2 11 H12.8 V26 L11 28.7 L9.2 26 Z" fill="#4d8df5"/></svg>
<svg class="s" style="left:613.5px;top:741.5px;width:16.0px;height:8.700000000000045px;" viewBox="0 0 16 8.7" preserveAspectRatio="none"><path d="M0 0 L16 0 L8 8.7 Z" fill="#222"/></svg>
<svg class="s" style="left:644px;top:734.7px;width:34px;height:25.0px;" viewBox="0 0 34 25" preserveAspectRatio="none"><ellipse cx="22.2" cy="16.6" rx="11.6" ry="8.3" fill="#5592f6"/><path d="M29.5 20.5 L34 25 L26.5 23.5 Z" fill="#5592f6"/><ellipse cx="12.3" cy="8.7" rx="13.5" ry="9.9" fill="#ffffff"/><ellipse cx="12.3" cy="8.7" rx="12.3" ry="8.7" fill="#bcd4fb"/><path d="M3.5 12.5 L0 17.6 L7 15.5 Z" fill="#bcd4fb"/></svg>
<svg class="s" style="left:1393px;top:549.2px;width:21px;height:28.5px;" viewBox="0 0 21 28.5" preserveAspectRatio="none"><rect x="0" y="0" width="21" height="28.5" rx="2" fill="#bed5fa"/><rect x="3.5" y="5.8" width="3" height="2.6" fill="#4d8df5"/><path d="M3.6 14 L5 15.4 L7.2 12.8" fill="none" stroke="#4d8df5" stroke-width="1"/><rect x="3.5" y="20.5" width="3" height="2.6" fill="#4d8df5"/><rect x="9" y="6.3" width="8" height="1.6" fill="#ffffff"/><rect x="9" y="13.5" width="8" height="1.6" fill="#ffffff"/><rect x="9" y="21" width="8" height="1.6" fill="#ffffff"/></svg>
<svg class="s" style="left:1393px;top:610.2px;width:21px;height:28.5px;" viewBox="0 0 21 28.5" preserveAspectRatio="none"><rect x="0" y="0" width="21" height="28.5" rx="2" fill="#bed5fa"/><rect x="3.5" y="5.8" width="3" height="2.6" fill="#4d8df5"/><path d="M3.6 14 L5 15.4 L7.2 12.8" fill="none" stroke="#4d8df5" stroke-width="1"/><rect x="3.5" y="20.5" width="3" height="2.6" fill="#4d8df5"/><rect x="9" y="6.3" width="8" height="1.6" fill="#ffffff"/><rect x="9" y="13.5" width="8" height="1.6" fill="#ffffff"/><rect x="9" y="21" width="8" height="1.6" fill="#ffffff"/></svg>
<svg class="s" style="left:1393px;top:732.2px;width:21px;height:28.5px;" viewBox="0 0 21 28.5" preserveAspectRatio="none"><rect x="0" y="0" width="21" height="28.5" rx="2" fill="#bed5fa"/><rect x="3.5" y="5.8" width="3" height="2.6" fill="#4d8df5"/><path d="M3.6 14 L5 15.4 L7.2 12.8" fill="none" stroke="#4d8df5" stroke-width="1"/><rect x="3.5" y="20.5" width="3" height="2.6" fill="#4d8df5"/><rect x="9" y="6.3" width="8" height="1.6" fill="#ffffff"/><rect x="9" y="13.5" width="8" height="1.6" fill="#ffffff"/><rect x="9" y="21" width="8" height="1.6" fill="#ffffff"/></svg>
<svg class="s" style="left:660.5px;top:795.5px;width:29.5px;height:24.5px;" viewBox="0 0 29.5 24.5" preserveAspectRatio="none"><ellipse cx="15" cy="10.5" rx="14.5" ry="10.8" fill="#bcd4fb"/><path d="M4 16 L0 24.2 Q5 24 10 20.5 Z" fill="#bcd4fb"/><path d="M9.5 17.3 L10 14.3 L16 8.3 L18.8 11.1 L12.8 17.1 Z" fill="#5292f6"/><path d="M17.3 7 L19 5.3 Q19.5 4.8 20 5.3 L21.8 7.1 Q22.3 7.6 21.8 8.1 L20.1 9.8 Z" fill="#5292f6"/></svg>
<svg class="s" style="left:660.5px;top:856.5px;width:29.5px;height:24.5px;" viewBox="0 0 29.5 24.5" preserveAspectRatio="none"><ellipse cx="15" cy="10.5" rx="14.5" ry="10.8" fill="#bcd4fb"/><path d="M4 16 L0 24.2 Q5 24 10 20.5 Z" fill="#bcd4fb"/><path d="M9.5 17.3 L10 14.3 L16 8.3 L18.8 11.1 L12.8 17.1 Z" fill="#5292f6"/><path d="M17.3 7 L19 5.3 Q19.5 4.8 20 5.3 L21.8 7.1 Q22.3 7.6 21.8 8.1 L20.1 9.8 Z" fill="#5292f6"/></svg>
<svg class="s" style="left:660.5px;top:917.5px;width:29.5px;height:24.5px;" viewBox="0 0 29.5 24.5" preserveAspectRatio="none"><ellipse cx="15" cy="10.5" rx="14.5" ry="10.8" fill="#bcd4fb"/><path d="M4 16 L0 24.2 Q5 24 10 20.5 Z" fill="#bcd4fb"/><path d="M9.5 17.3 L10 14.3 L16 8.3 L18.8 11.1 L12.8 17.1 Z" fill="#5292f6"/><path d="M17.3 7 L19 5.3 Q19.5 4.8 20 5.3 L21.8 7.1 Q22.3 7.6 21.8 8.1 L20.1 9.8 Z" fill="#5292f6"/></svg>
<svg class="s" style="left:660.5px;top:978.5px;width:29.5px;height:24.5px;" viewBox="0 0 29.5 24.5" preserveAspectRatio="none"><ellipse cx="15" cy="10.5" rx="14.5" ry="10.8" fill="#bcd4fb"/><path d="M4 16 L0 24.2 Q5 24 10 20.5 Z" fill="#bcd4fb"/><path d="M9.5 17.3 L10 14.3 L16 8.3 L18.8 11.1 L12.8 17.1 Z" fill="#5292f6"/><path d="M17.3 7 L19 5.3 Q19.5 4.8 20 5.3 L21.8 7.1 Q22.3 7.6 21.8 8.1 L20.1 9.8 Z" fill="#5292f6"/></svg>
<svg class="s" style="left:660.5px;top:1039.5px;width:29.5px;height:24.5px;" viewBox="0 0 29.5 24.5" preserveAspectRatio="none"><ellipse cx="15" cy="10.5" rx="14.5" ry="10.8" fill="#bcd4fb"/><path d="M4 16 L0 24.2 Q5 24 10 20.5 Z" fill="#bcd4fb"/><path d="M9.5 17.3 L10 14.3 L16 8.3 L18.8 11.1 L12.8 17.1 Z" fill="#5292f6"/><path d="M17.3 7 L19 5.3 Q19.5 4.8 20 5.3 L21.8 7.1 Q22.3 7.6 21.8 8.1 L20.1 9.8 Z" fill="#5292f6"/></svg>
<svg class="s" style="left:660.5px;top:1100.5px;width:29.5px;height:24.5px;" viewBox="0 0 29.5 24.5" preserveAspectRatio="none"><ellipse cx="15" cy="10.5" rx="14.5" ry="10.8" fill="#bcd4fb"/><path d="M4 16 L0 24.2 Q5 24 10 20.5 Z" fill="#bcd4fb"/><path d="M9.5 17.3 L10 14.3 L16 8.3 L18.8 11.1 L12.8 17.1 Z" fill="#5292f6"/><path d="M17.3 7 L19 5.3 Q19.5 4.8 20 5.3 L21.8 7.1 Q22.3 7.6 21.8 8.1 L20.1 9.8 Z" fill="#5292f6"/></svg>
<svg class="s" style="left:660.5px;top:1161.5px;width:29.5px;height:24.5px;" viewBox="0 0 29.5 24.5" preserveAspectRatio="none"><ellipse cx="15" cy="10.5" rx="14.5" ry="10.8" fill="#bcd4fb"/><path d="M4 16 L0 24.2 Q5 24 10 20.5 Z" fill="#bcd4fb"/><path d="M9.5 17.3 L10 14.3 L16 8.3 L18.8 11.1 L12.8 17.1 Z" fill="#5292f6"/><path d="M17.3 7 L19 5.3 Q19.5 4.8 20 5.3 L21.8 7.1 Q22.3 7.6 21.8 8.1 L20.1 9.8 Z" fill="#5292f6"/></svg>
<div class="r" style="left:2440px;top:93px;width:33px;height:1382px;background:transparent;border-right:1px solid #a6a6a6;box-shadow:inset -1px 0 0 #f8f8f8;box-sizing:border-box;"></div>
<div class="r" style="left:2400px;top:1440px;width:73px;height:35px;background:#c2c2c2;"></div>
<div class="r" style="left:2390px;top:1420px;width:83px;height:55px;background:#f3f3f3;border-right:1px solid #9a9a9a;border-bottom:1px solid #9a9a9a;border-bottom-right-radius:10px;box-shadow:inset -1px -1px 0 #fbfbfb;box-sizing:border-box;border-top:0;"></div>
<div class="r" style="left:1580px;top:1474px;width:810px;height:1px;background:#9a9a9a;"></div>
<div class="r" style="left:1580px;top:1473px;width:810px;height:1px;background:#fbfbfb;"></div>
<div class="r" style="left:2472px;top:634px;width:1px;height:7px;background:#333;"></div>
<div class="r" style="left:2472px;top:663px;width:1px;height:10px;background:#333;"></div>
</body></html>
